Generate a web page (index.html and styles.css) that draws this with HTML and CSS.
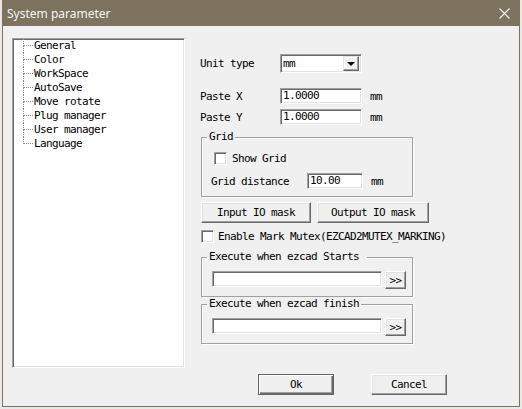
FILE: index.html
```html
<!DOCTYPE html>
<html lang="en">
<head>
    <meta charset="UTF-8">
    <title>System parameter</title>
    <link rel="stylesheet" href="styles.css">
</head>
<body>
    <div class="window">
        <div class="titlebar">
            <span class="title">System parameter</span>
            <svg class="close" width="11" height="11" viewBox="0 0 11 11">
                <path d="M0.5 0.5 L10.5 10.5 M10.5 0.5 L0.5 10.5" stroke="#f4f4f4" stroke-width="1.1" fill="none"/>
            </svg>
        </div>
        <div class="client">
            <div class="main">
                <div class="tree">
                    <ul>
                        <li><span class="elbow"><i class="up"></i><i class="down"></i></span>General</li>
                        <li><span class="elbow"><i class="up"></i><i class="down"></i></span>Color</li>
                        <li><span class="elbow"><i class="up"></i><i class="down"></i></span>WorkSpace</li>
                        <li><span class="elbow"><i class="up"></i><i class="down"></i></span>AutoSave</li>
                        <li><span class="elbow"><i class="up"></i><i class="down"></i></span>Move rotate</li>
                        <li><span class="elbow"><i class="up"></i><i class="down"></i></span>Plug manager</li>
                        <li><span class="elbow"><i class="up"></i><i class="down"></i></span>User manager</li>
                        <li class="last"><span class="elbow"><i class="up"></i><i class="down"></i></span>Language</li>
                    </ul>
                </div>

                <div class="settings">
                    <div class="row unit-row">
                        <span class="label">Unit type</span>
                        <span class="select"><span class="select-value">mm</span><span class="select-arrow"></span></span>
                    </div>
                    <div class="row paste-x">
                        <span class="label">Paste X</span>
                        <span class="field">1.0000</span>
                        <span class="unit">mm</span>
                    </div>
                    <div class="row paste-y">
                        <span class="label">Paste Y</span>
                        <span class="field">1.0000</span>
                        <span class="unit">mm</span>
                    </div>

                    <div class="group grid-group">
                        <span class="group-title">Grid</span>
                        <div class="check-row show-grid"><span class="checkbox"></span>Show Grid</div>
                        <div class="row grid-distance">
                            <span class="label wide">Grid distance</span>
                            <span class="field short">10.00</span>
                            <span class="unit">mm</span>
                        </div>
                    </div>

                    <div class="io-buttons">
                        <button class="btn io-in">Input IO mask</button>
                        <button class="btn io-out">Output IO mask</button>
                    </div>

                    <div class="check-row mutex"><span class="checkbox"></span>Enable Mark Mutex(EZCAD2MUTEX_MARKING)</div>

                    <div class="group exec-group">
                        <span class="group-title">Execute when ezcad Starts </span>
                        <div class="path-row">
                            <span class="field path"></span>
                            <button class="btn browse">&gt;&gt;</button>
                        </div>
                    </div>

                    <div class="group exec-group second">
                        <span class="group-title">Execute when ezcad finish</span>
                        <div class="path-row">
                            <span class="field path"></span>
                            <button class="btn browse">&gt;&gt;</button>
                        </div>
                    </div>
                </div>
            </div>

            <div class="footer">
                <button class="btn btn-default">Ok</button>
                <button class="btn">Cancel</button>
            </div>
        </div>
    </div>
</body>
</html>
```

FILE: styles.css
```css
body {
    margin: 0;
    background: #e9e9e9;
    font-family: "DejaVu Sans Mono", "Liberation Mono", monospace;
    font-size: 11px;
    letter-spacing: -0.62px;
    color: #000;
}
.window {
    margin-left: 2px;
    width: 518px;
    height: 407px;
    box-sizing: border-box;
    border: 1px solid #7d735f;
    border-top: 0;
    background: #f0f0f0;
    display: flex;
    flex-direction: column;
}
.titlebar {
    height: 26px;
    flex: none;
    background: #7d735f;
    display: flex;
    align-items: center;
    justify-content: space-between;
    padding: 0 9px 0 4px;
}
.title {
    font-family: "Noto Sans", "Liberation Sans", sans-serif;
    font-size: 12px;
    letter-spacing: 0;
    color: #f4f4f4;
}
.close {
    display: block;
}
.client {
    flex: 1;
}
.main {
    display: flex;
    gap: 15px;
    padding: 12px 0 0 9px;
}

/* tree panel */
.tree {
    width: 173px;
    height: 330px;
    box-sizing: border-box;
    background: #fff;
    border: 1px solid;
    border-color: #a0a0a0 #fff #fff #a0a0a0;
    box-shadow: inset 1px 1px #696969, inset -1px -1px #e3e3e3;
}
.tree ul {
    list-style: none;
    margin: 0;
    padding: 0 0 0 10px;
}
.tree li {
    display: flex;
    align-items: center;
    height: 14px;
    line-height: 14px;
    white-space: nowrap;
}
.elbow {
    display: flex;
    flex-direction: column;
    align-self: stretch;
    width: 10px;
    margin-right: 1px;
}
.elbow i {
    display: block;
    flex: 1;
    border-left: 1px dotted #8a8a8a;
}
.elbow .up {
    border-bottom: 1px dotted #8a8a8a;
    flex: none;
    height: 6px;
}
.tree li.last .down {
    border-left-color: transparent;
}

/* right side */
.settings {
    display: flex;
    flex-direction: column;
    padding-top: 16px;
    width: 240px;
}
.row {
    display: flex;
    align-items: center;
}
.label {
    width: 80px;
    flex: none;
}
.label.wide {
    width: 96px;
}
.unit-row {
    height: 19px;
}
.paste-x {
    height: 16px;
    margin-top: 15px;
}
.paste-y {
    height: 16px;
    margin-top: 5px;
}
.field {
    width: 82px;
    height: 16px;
    box-sizing: border-box;
    background: #fff;
    border: 1px solid;
    border-color: #a0a0a0 #fff #fff #a0a0a0;
    box-shadow: inset 1px 1px #696969, inset -1px -1px #e3e3e3;
    padding-left: 2px;
    line-height: 14px;
}
.field.short {
    width: 56px;
}
.unit {
    margin-left: 8px;
}
.select {
    width: 82px;
    height: 19px;
    box-sizing: border-box;
    display: flex;
    align-items: center;
    justify-content: space-between;
    background: #fff;
    border: 1px solid;
    border-color: #a0a0a0 #fff #fff #a0a0a0;
    box-shadow: inset 1px 1px #696969, inset -1px -1px #e3e3e3;
    padding: 2px;
}
.select-arrow {
    width: 16px;
    height: 15px;
    box-sizing: border-box;
    background: #f0f0f0;
    border: 1px solid;
    border-color: #e3e3e3 #696969 #696969 #e3e3e3;
    box-shadow: inset -1px -1px #a0a0a0, inset 1px 1px #fff;
    display: flex;
    align-items: center;
    justify-content: center;
}
.select-arrow::after {
    content: "";
    border-left: 4px solid transparent;
    border-right: 4px solid transparent;
    border-top: 4px solid #000;
    margin-top: 1px;
}

/* group boxes */
.group {
    width: 212px;
    box-sizing: border-box;
    margin-left: 1px;
    border: 1px solid #a0a0a0;
    box-shadow: inset 1px 1px #fff, 1px 1px #fff;
    display: flex;
    flex-direction: column;
    align-items: flex-start;
    padding-bottom: 7px;
}
.group-title {
    display: block;
    line-height: 14px;
    margin: -8px 0 0 5px;
    padding: 0 2px;
    background: #f0f0f0;
    white-space: pre;
}
.grid-group {
    margin-top: 12px;
}
.check-row {
    display: flex;
    align-items: center;
    height: 13px;
    white-space: nowrap;
}
.checkbox {
    width: 13px;
    height: 13px;
    box-sizing: border-box;
    flex: none;
    background: #fff;
    border: 1px solid;
    border-color: #a0a0a0 #fff #fff #a0a0a0;
    box-shadow: inset 1px 1px #696969, inset -1px -1px #e3e3e3;
    margin-right: 5px;
}
.show-grid {
    margin: 8px 0 0 12px;
}
.grid-distance {
    height: 16px;
    margin: 8px 0 0 9px;
}
.io-buttons {
    display: flex;
    gap: 6px;
    margin: 5px 0 0 1px;
}
.mutex {
    margin: 7px 0 0 1px;
}
.mutex .checkbox {
    margin-right: 4px;
}
.exec-group {
    margin-top: 14px;
}
.exec-group.second {
    margin-top: 7px;
}
.path-row {
    display: flex;
    gap: 3px;
    margin: 7px 0 0 10px;
}
.field.path {
    width: 170px;
}

/* buttons */
.btn {
    font: inherit;
    letter-spacing: inherit;
    color: #000;
    background: #f0f0f0;
    height: 21px;
    padding: 0;
    box-sizing: border-box;
    border: 1px solid;
    border-color: #fff #696969 #696969 #fff;
    box-shadow: inset -1px -1px #a0a0a0, inset 1px 1px #e3e3e3;
}
.io-in {
    width: 110px;
}
.io-out {
    width: 112px;
}
.browse {
    width: 21px;
    height: 18px;
}
.footer {
    display: flex;
    gap: 37px;
    padding-left: 255px;
    margin-top: 6px;
}
.footer .btn {
    width: 76px;
}
.btn-default {
    border-color: #646464;
    box-shadow: inset 1px 1px #fff, inset -1px -1px #696969, inset -2px -2px #a0a0a0;
}
```
